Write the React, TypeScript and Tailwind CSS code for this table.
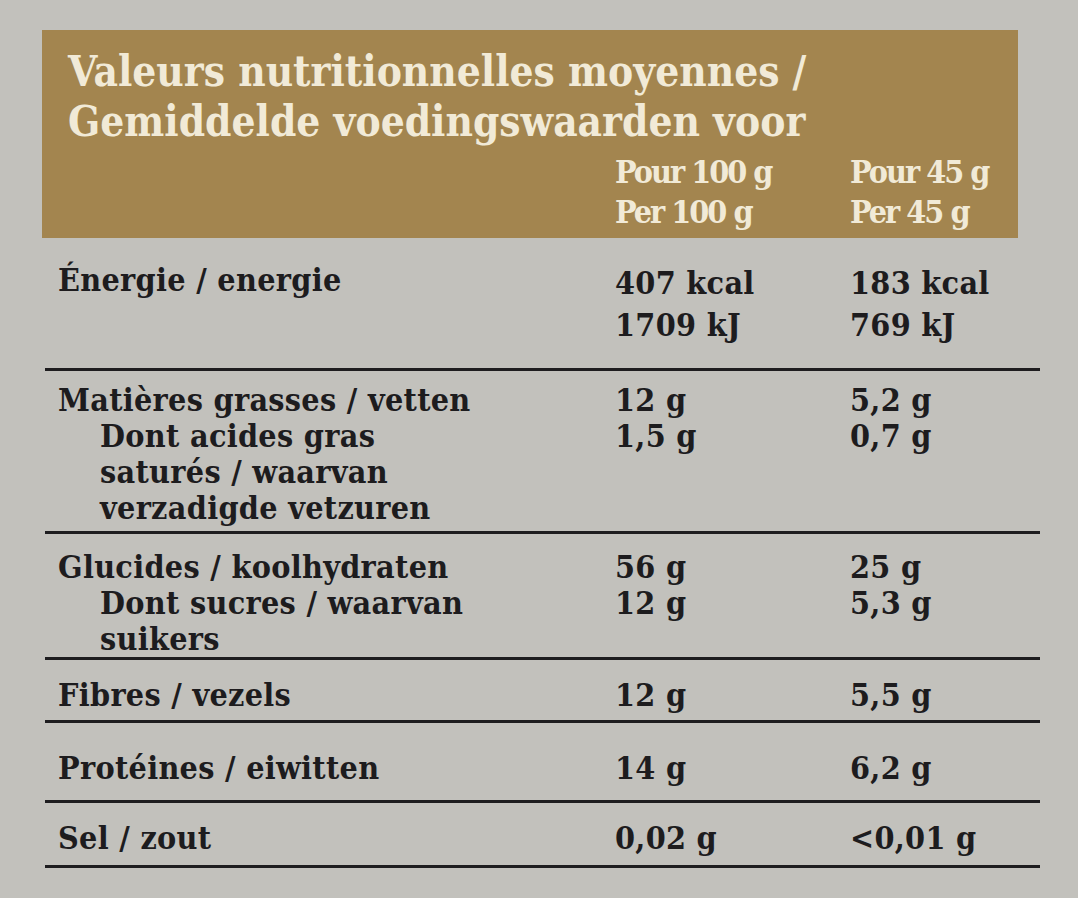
import React from "react";

interface INutrientRow {
  label: string[];
  per100: string[];
  perPortion: string[];
  rowClass: string;
  valueLeading?: string;
}

const ROWS: INutrientRow[] = [
  {
    label: ["Énergie / energie"],
    per100: ["407 kcal", "1709 kJ"],
    perPortion: ["183 kcal", "769 kJ"],
    rowClass: "pt-[24px] pb-[22px]",
    valueLeading: "leading-[42px]",
  },
  {
    label: [
      "Matières grasses / vetten",
      "Dont acides gras",
      "saturés / waarvan",
      "verzadigde vetzuren",
    ],
    per100: ["12 g", "1,5 g"],
    perPortion: ["5,2 g", "0,7 g"],
    rowClass: "pt-[11px] pb-[5px]",
  },
  {
    label: ["Glucides / koolhydraten", "Dont sucres / waarvan", "suikers"],
    per100: ["56 g", "12 g"],
    perPortion: ["25 g", "5,3 g"],
    rowClass: "pt-[15px] pb-[0px]",
  },
  {
    label: ["Fibres / vezels"],
    per100: ["12 g"],
    perPortion: ["5,5 g"],
    rowClass: "pt-[17px] pb-[7px]",
  },
  {
    label: ["Protéines / eiwitten"],
    per100: ["14 g"],
    perPortion: ["6,2 g"],
    rowClass: "pt-[27px] pb-[14px]",
  },
  {
    label: ["Sel / zout"],
    per100: ["0,02 g"],
    perPortion: ["<0,01 g"],
    rowClass: "pt-[17px] pb-[9px]",
  },
];

export default function App() {
  return (
    <div
      className="min-h-screen w-full bg-[#c2c1bc] pt-[30px] pl-[42px] text-[#1d1c1e]"
      style={{ fontFamily: '"DejaVu Serif Condensed", "DejaVu Serif", "Liberation Serif", serif' }}
    >
      {/* header band */}
      <div className="w-[976px] h-[208px] bg-[#a3854f] pl-[26px] pt-[17px] text-[#f1ead7] font-bold">
        <p className="text-[42px] leading-[50px] tracking-[0px]">
          Valeurs nutritionnelles moyennes /
        </p>
        <p className="text-[42px] leading-[50px] tracking-[0px]">
          Gemiddelde voedingswaarden voor
        </p>
        <div className="mt-[5px] grid grid-cols-[547px_235px_1fr] text-[32px] leading-[40px] tracking-[-2px]">
          <div />
          <div>
            <p>Pour 100 g</p>
            <p>Per 100 g</p>
          </div>
          <div>
            <p>Pour 45 g</p>
            <p>Per 45 g</p>
          </div>
        </div>
      </div>

      {/* table body */}
      <div className="ml-[3px] w-[995px]">
        {ROWS.map((row, i) => (
          <div
            key={row.label[0]}
            className={`grid grid-cols-[557px_235px_1fr] pl-[13px] text-[32px] leading-[36px] tracking-[0.3px] font-bold border-[#1e1d1f] ${
              i > 0 ? "border-t-[3px]" : ""
            } ${i === ROWS.length - 1 ? "border-b-[3px]" : ""} ${row.rowClass}`}
          >
            <div>
              {row.label.map((line, j) => (
                <p key={line} className={j > 0 ? "pl-[42px]" : ""}>
                  {line}
                </p>
              ))}
            </div>
            <div className={row.valueLeading ?? ""}>
              {row.per100.map((v) => (
                <p key={v}>{v}</p>
              ))}
            </div>
            <div className={row.valueLeading ?? ""}>
              {row.perPortion.map((v) => (
                <p key={v}>{v}</p>
              ))}
            </div>
          </div>
        ))}
      </div>
    </div>
  );
}
